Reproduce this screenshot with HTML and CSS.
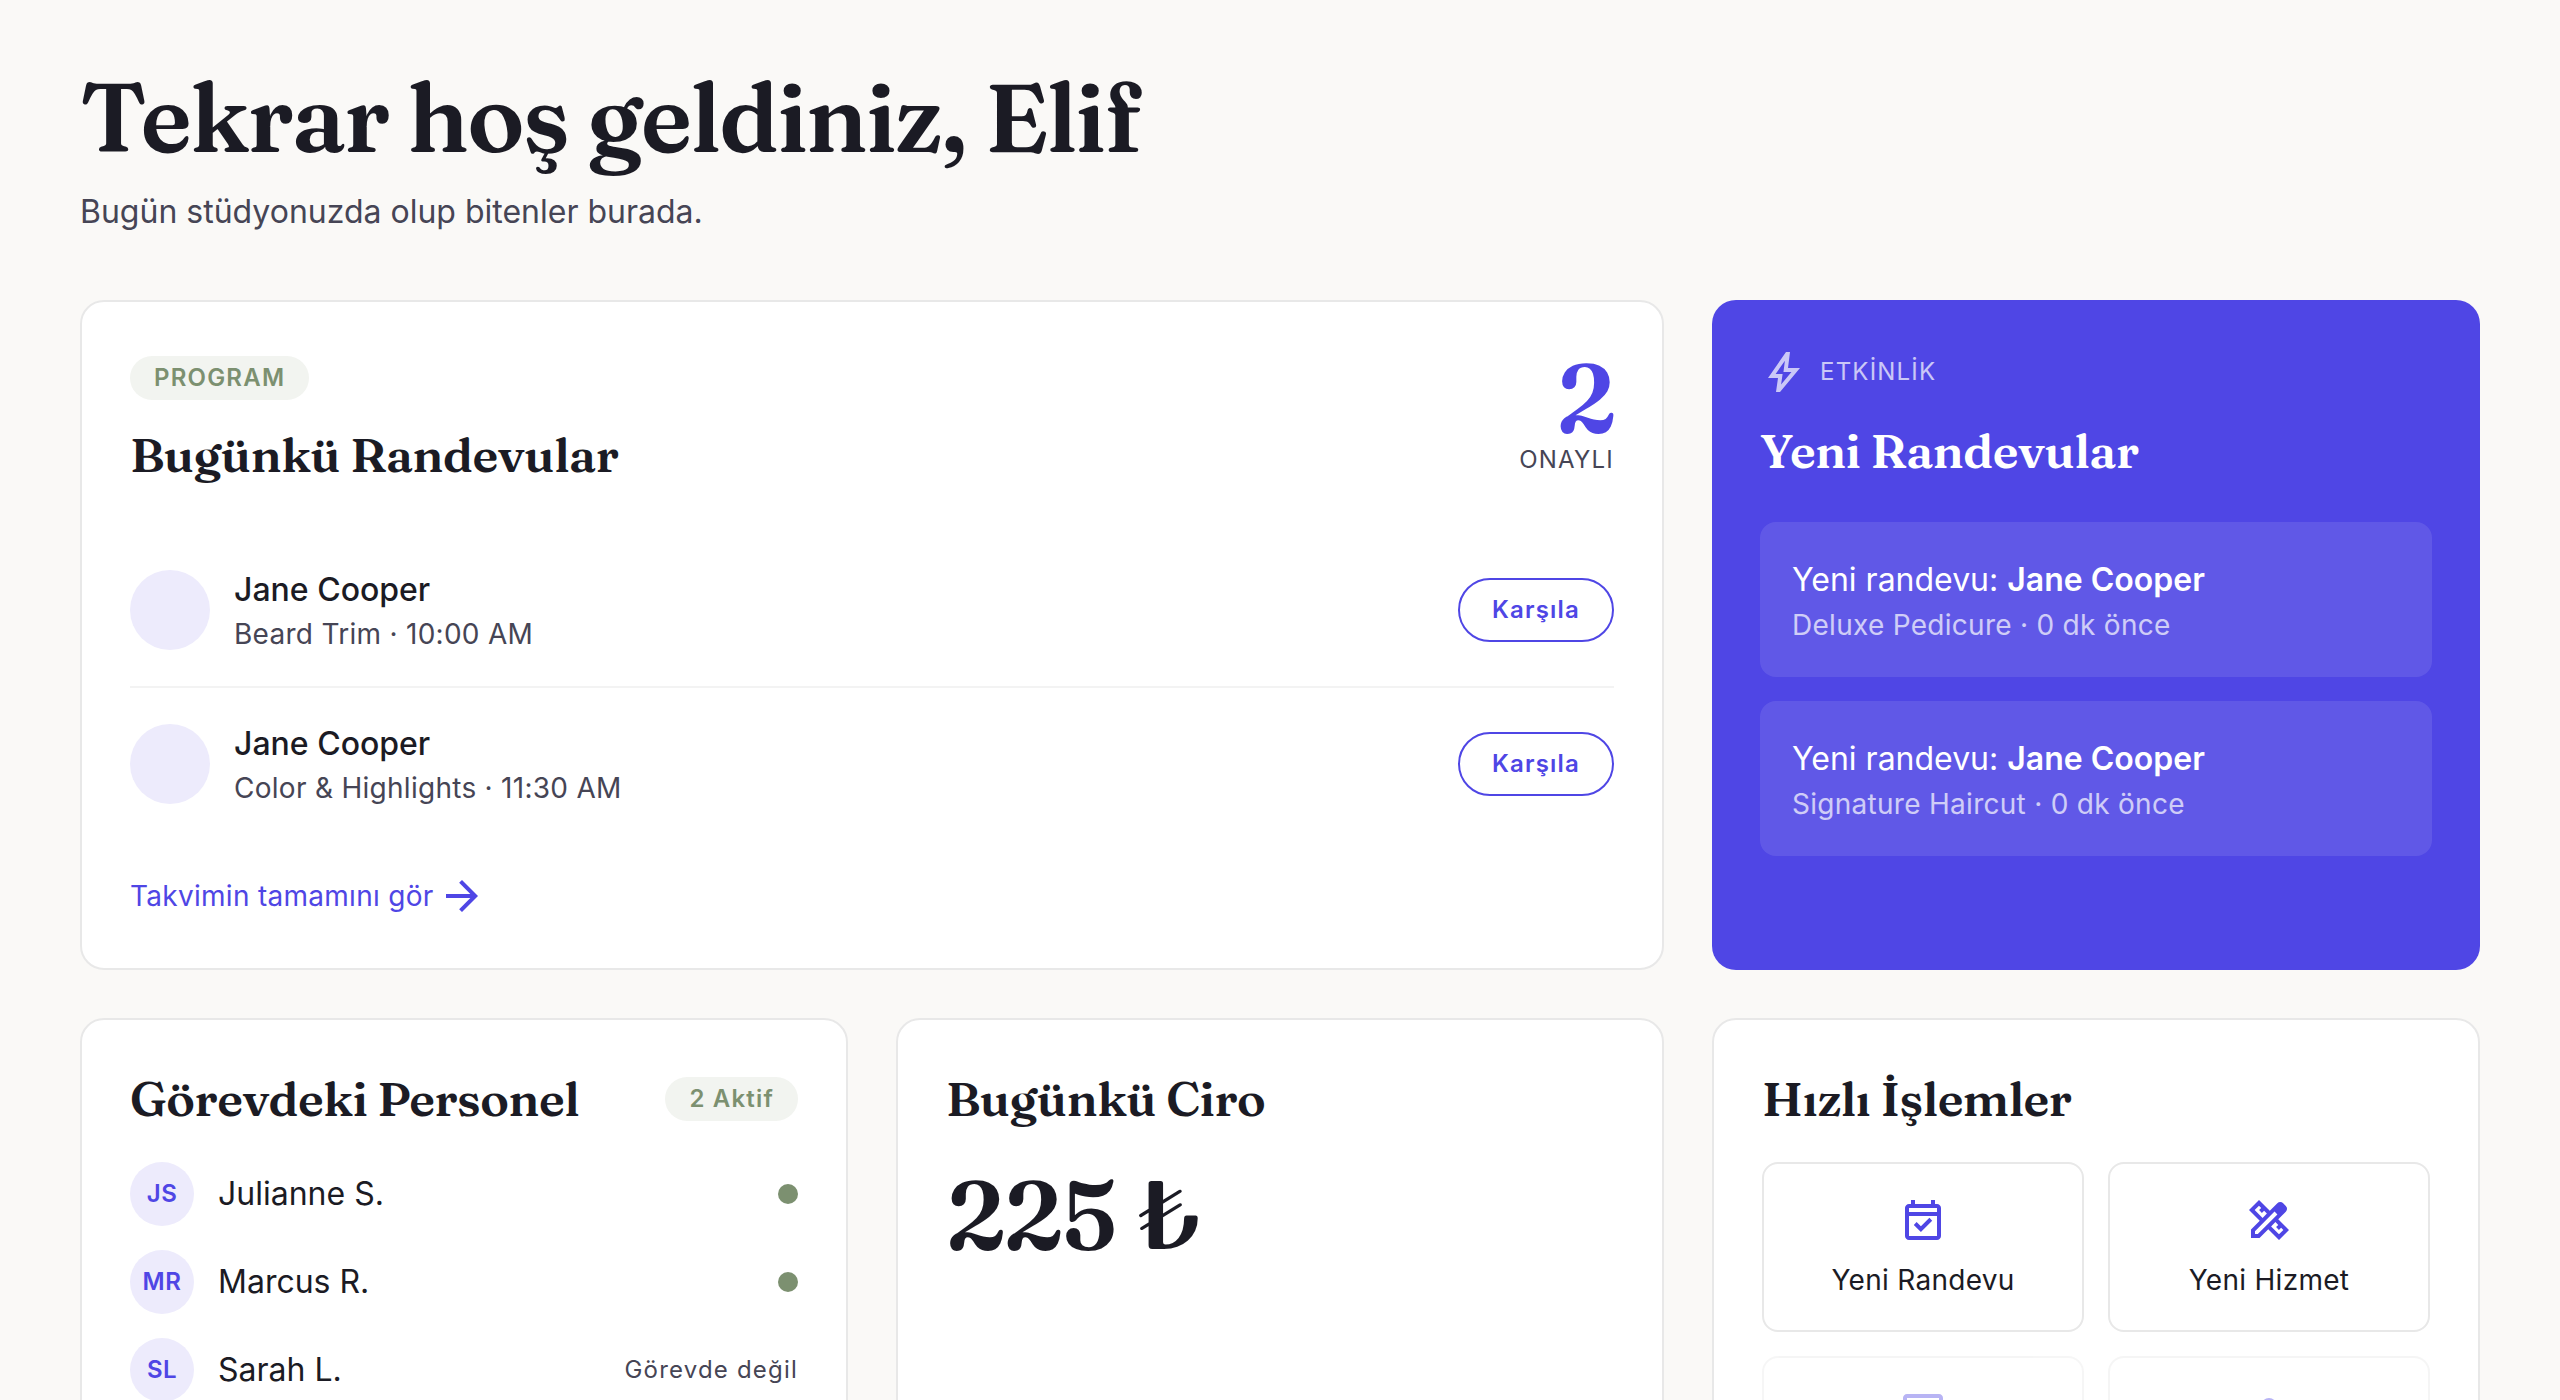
FILE: index.html
```html
<!DOCTYPE html>
<html lang="tr">
<head>
<meta charset="utf-8">
<meta name="viewport" content="width=device-width, initial-scale=1">
<title>Stüdyo Paneli</title>
<link rel="stylesheet" href="styles.css">
</head>
<body>
<main class="page">
  <header class="welcome">
    <h1 class="welcome-title">Tekrar hoş geldiniz, Elif</h1>
    <p class="welcome-text">Bugün stüdyonuzda olup bitenler burada.</p>
  </header>

  <div class="grid">
    <section class="card schedule">
      <div class="schedule-head">
        <div class="schedule-heading">
          <span class="badge">PROGRAM</span>
          <h2 class="title">Bugünkü Randevular</h2>
        </div>
        <div class="count">
          <span class="count-number">2</span>
          <span class="caption">ONAYLI</span>
        </div>
      </div>
      <ul class="appointments">
        <li class="appointment">
          <span class="avatar avatar-large"></span>
          <div class="person">
            <span class="person-name">Jane Cooper</span>
            <span class="person-detail">Beard Trim · 10:00 AM</span>
          </div>
          <button class="greet" type="button">Karşıla</button>
        </li>
        <li class="appointment">
          <span class="avatar avatar-large"></span>
          <div class="person">
            <span class="person-name">Jane Cooper</span>
            <span class="person-detail">Color &amp; Highlights · 11:30 AM</span>
          </div>
          <button class="greet" type="button">Karşıla</button>
        </li>
      </ul>
      <a class="calendar-link" href="#takvim">Takvimin tamamını gör
        <svg class="icon" viewBox="0 0 24 24" aria-hidden="true"><path d="M16.175 13H4v-2h12.175l-5.600-5.600L12 4l8 8-8 8-1.425-1.400z"/></svg>
      </a>
    </section>

    <section class="card activity">
      <div class="activity-head">
        <svg class="icon" viewBox="0 0 24 24" aria-hidden="true"><path d="m10.550 18.200 5.175-6.200h-4l.725-5.675L7.825 13H11.300zM8 22l1-7H4l9-13h2l-1 8h6L10 22z"/></svg>
        <span class="caption">ETKİNLİK</span>
      </div>
      <h2 class="title">Yeni Randevular</h2>
      <ul class="events">
        <li class="event">
          <p class="event-title">Yeni randevu: <strong>Jane Cooper</strong></p>
          <p class="event-detail">Deluxe Pedicure · 0 dk önce</p>
        </li>
        <li class="event">
          <p class="event-title">Yeni randevu: <strong>Jane Cooper</strong></p>
          <p class="event-detail">Signature Haircut · 0 dk önce</p>
        </li>
      </ul>
    </section>

    <section class="card">
      <div class="staff-head">
        <h2 class="title">Görevdeki Personel</h2>
        <span class="badge">2 Aktif</span>
      </div>
      <ul class="staff">
        <li class="member"><span class="avatar">JS</span><span class="member-name">Julianne S.</span><span class="dot"></span></li>
        <li class="member"><span class="avatar">MR</span><span class="member-name">Marcus R.</span><span class="dot"></span></li>
        <li class="member"><span class="avatar">SL</span><span class="member-name">Sarah L.</span><span class="off-duty">Görevde değil</span></li>
      </ul>
    </section>

    <section class="card">
      <h2 class="title">Bugünkü Ciro</h2>
      <p class="revenue">225 ₺</p>
    </section>

    <section class="card">
      <h2 class="title">Hızlı İşlemler</h2>
      <div class="actions">
        <button class="action" type="button">
          <svg class="icon" viewBox="0 0 24 24" aria-hidden="true"><path d="M10.950 18 7.400 14.450l1.400-1.400 2.150 2.100 4.250-4.250 1.400 1.450zM5 22q-.825 0-1.412-.587T3 20V6q0-.825.588-1.412T5 4h1V2h2v2h8V2h2v2h1q.825 0 1.413.588T21 6v14q0 .825-.587 1.413T19 22zm0-2h14V10H5zM5 8h14V6H5z"/></svg>
          <span>Yeni Randevu</span>
        </button>
        <button class="action" type="button">
          <svg class="icon" viewBox="0 0 24 24" aria-hidden="true"><path d="m8.800 10.950 2.150-2.175-1.400-1.425-1.100 1.100-1.400-1.400 1.075-1.100L7 4.825 4.825 7zM17 19.175 19.175 17l-1.125-1.125-1.100 1.075-1.400-1.400 1.075-1.100-1.425-1.400-2.150 2.150zM7.250 21H3v-4.250l4.375-4.375L2 7l5-5 5.400 5.400 3.775-3.800q.3-.3.675-.45t.775-.15.775.15.675.45L20.400 4.950q.3.300.450.675T21 6.400t-.15.763-.45.662l-3.775 3.800L22 17l-5 5-5.375-5.375zM5 19h1.400l9.800-9.775L14.775 7.800 5 17.600z"/></svg>
          <span>Yeni Hizmet</span>
        </button>
        <button class="action" type="button" disabled>
          <svg class="icon" viewBox="0 0 24 24" aria-hidden="true"><path d="M2 22V4q0-.825.588-1.412T4 2h16q.825 0 1.413.588T22 4v12q0 .825-.587 1.413T20 18H6zm3.150-6H20V4H4v13.125z"/></svg>
        </button>
        <button class="action" type="button" disabled>
          <svg class="icon" viewBox="0 0 24 24" aria-hidden="true"><path d="M12 12q-1.650 0-2.825-1.175T8 8t1.175-2.825T12 4t2.825 1.175T16 8t-1.175 2.825T12 12m-8 8v-2.800q0-.85.438-1.562T5.600 14.550q1.550-.775 3.150-1.162T12 13t3.250.388 3.150 1.162q.725.375 1.163 1.088T20 17.200V20z"/></svg>
        </button>
      </div>
    </section>
  </div>
</main>
</body>
</html>
```

FILE: styles.css
```css
:root {
  --ink: #1b1b24;
  --muted: #464555;
  --accent: #4f46e5;
  --accent-soft: #edebfc;
  --sage: #7c9070;
  --sage-soft: #f2f4f0;
  --line: #e8e8e8;
  --serif: Fraunces, "Liberation Serif", serif;
}

* { box-sizing: border-box; }

body {
  margin: 0;
  height: 100vh;
  overflow: hidden;
  background: #faf9f7;
  color: var(--ink);
  font-family: Inter, sans-serif;
  font-size: 32px;
  line-height: 48px;
}

h1, h2, p, ul { margin: 0; padding: 0; }
ul { list-style: none; }
button { font: inherit; cursor: pointer; }

.page { padding: 64px 80px; }
.welcome { margin-bottom: 64px; }

.welcome-title {
  font: 600 96px/106px var(--serif);
  letter-spacing: -0.02em;
}

.welcome-text {
  margin-top: 18px;
  color: var(--muted);
}

.grid {
  display: grid;
  grid-template-columns: repeat(3, 1fr);
  gap: 48px;
}

.card {
  padding: 48px;
  background: #fff;
  border: 2px solid var(--line);
  border-radius: 24px;
}

.title {
  font: 600 48px/62px var(--serif);
  letter-spacing: -0.01em;
}

.icon {
  width: 48px;
  height: 48px;
  fill: currentColor;
  flex: none;
}

.caption {
  color: var(--muted);
  font-size: 24px;
  line-height: 32px;
  letter-spacing: 0.05em;
}

.badge {
  padding: 6px 24px;
  border-radius: 24px;
  background: var(--sage-soft);
  color: var(--sage);
  font-size: 24px;
  font-weight: 600;
  line-height: 32px;
  letter-spacing: 0.05em;
}

/* Today's appointments */
.schedule { grid-column: span 2; }

.schedule-head {
  display: flex;
  justify-content: space-between;
  margin-bottom: 48px;
}

.schedule-heading {
  display: flex;
  flex-direction: column;
  align-items: flex-start;
  gap: 24px;
  padding-top: 6px;
}

.count {
  display: flex;
  flex-direction: column;
  align-items: flex-end;
}

.count-number {
  color: var(--accent);
  font: 600 96px/94px var(--serif);
  letter-spacing: -0.02em;
}

.appointment {
  display: flex;
  align-items: center;
  gap: 24px;
  padding: 32px 0;
}

.appointment + .appointment { border-top: 2px solid #f3f3f3; }

.avatar {
  display: flex;
  align-items: center;
  justify-content: center;
  flex: none;
  width: 64px;
  height: 64px;
  border-radius: 50%;
  background: var(--accent-soft);
  color: var(--accent);
  font-size: 24px;
  font-weight: 600;
  letter-spacing: 0.02em;
}

.avatar-large { width: 80px; height: 80px; }

.person {
  display: flex;
  flex: 1;
  flex-direction: column;
}

.person-name { font-weight: 500; }

.person-detail {
  color: var(--muted);
  font-size: 28px;
  line-height: 40px;
  letter-spacing: 0.01em;
}

.greet {
  padding: 14px 32px;
  border: 2px solid var(--accent);
  border-radius: 32px;
  background: none;
  color: var(--accent);
  font-size: 24px;
  font-weight: 600;
  line-height: 32px;
  letter-spacing: 0.05em;
}

.calendar-link {
  display: flex;
  width: fit-content;
  align-items: center;
  gap: 4px;
  margin-top: 32px;
  color: var(--accent);
  font-size: 28px;
  line-height: 40px;
  letter-spacing: 0.01em;
  text-decoration: none;
}

/* Recent activity */
.activity {
  border: 0;
  background: var(--accent);
  color: #fff;
}

.activity-head {
  display: flex;
  align-items: center;
  gap: 12px;
  margin-bottom: 24px;
  opacity: 0.7;
}

.activity-head .caption { color: inherit; }

.events {
  display: flex;
  flex-direction: column;
  gap: 24px;
  margin-top: 40px;
}

.event {
  padding: 32px;
  border-radius: 16px;
  background: rgb(255 255 255 / 10%);
}

.event-title { line-height: 51px; }
.event strong { font-weight: 600; }

.event-detail {
  font-size: 28px;
  line-height: 40px;
  letter-spacing: 0.01em;
  opacity: 0.7;
}

/* Staff */
.staff-head {
  display: flex;
  align-items: center;
  justify-content: space-between;
}

.staff {
  display: flex;
  flex-direction: column;
  gap: 24px;
  margin-top: 32px;
}

.member {
  display: flex;
  align-items: center;
  gap: 24px;
}

.member-name { flex: 1; }

.dot {
  width: 20px;
  height: 20px;
  border-radius: 50%;
  background: var(--sage);
}

.off-duty {
  color: var(--muted);
  font-size: 24px;
  letter-spacing: 0.05em;
}

/* Revenue */
.revenue {
  margin-top: 32px;
  font: 600 96px/104px var(--serif);
  letter-spacing: -0.02em;
}

/* Quick actions */
.actions {
  display: grid;
  grid-template-columns: 1fr 1fr;
  gap: 24px;
  margin-top: 32px;
}

.action {
  display: flex;
  flex-direction: column;
  align-items: center;
  gap: 16px;
  padding: 32px 24px 30px;
  border: 2px solid var(--line);
  border-radius: 16px;
  background: none;
  color: var(--ink);
  font-size: 28px;
  line-height: 40px;
  letter-spacing: 0.01em;
}

.action .icon { color: var(--accent); }
.action:disabled { opacity: 0.4; }
```
